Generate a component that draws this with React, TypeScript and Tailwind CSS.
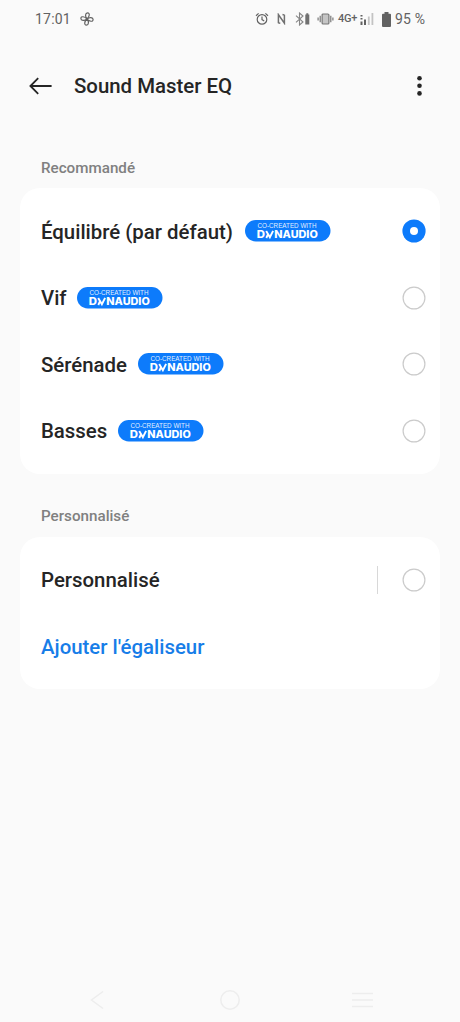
import type { ReactNode } from "react";

const presets = [
  { name: "Équilibré (par défaut)", width: "w-[193px]", selected: true },
  { name: "Vif", width: "w-[25px]", selected: false },
  { name: "Sérénade", width: "w-[86.5px]", selected: false },
  { name: "Basses", width: "w-[66.5px]", selected: false },
];

function StatusBar() {
  return (
    <div className="flex h-[38px] items-center pl-[35px] text-[14px] text-[#626262]">
      <span className="w-[45px] tracking-[0.2px]">17:01</span>
      {/* Fan */}
      <svg width="14" height="14" viewBox="0 0 14 14" fill="none" stroke="#626262" strokeWidth="1.2">
        <path d="M7 7C4.8 4.5 5.2.9 7.6.9S9.8 4.5 7 7Z" />
        <path d="M7 7c2.5-2.2 6.1-1.8 6.1.6S9.5 9.8 7 7Z" />
        <path d="M7 7c2.2 2.5 1.8 6.1-.6 6.1S4.2 9.5 7 7Z" />
        <path d="M7 7C4.5 9.2.9 8.8.9 6.4S4.5 4.2 7 7Z" />
      </svg>
      {/* Alarm */}
      <svg className="ml-[161px]" width="14" height="14" viewBox="0 0 14 14" fill="none" stroke="#626262" strokeWidth="1.2">
        <circle cx="7" cy="7.4" r="4.8" />
        <path d="M1 3.7 3.6 1.4M13 3.7l-2.6-2.3M7 4.6v3l2.2 1.3" />
      </svg>
      {/* NFC */}
      <svg className="ml-[8px]" width="9" height="12" viewBox="0 0 9 12" fill="none" stroke="#707070" strokeWidth="1.5">
        <path d="M1.4 10.2V1.6l6 8.6V1.8M3.3 10.4l-2-.6M5.5 1.5l2 .6" />
      </svg>
      {/* Bluetooth with device battery */}
      <svg className="ml-[9px]" width="15" height="14" viewBox="0 0 15 14" fill="none" stroke="#858585" strokeWidth="1.1">
        <path d="m1 3.6 7 6.4-3.5 3V1L8 4 1 10.4" />
        <path d="M10.3 2.4h4v10.2h-4zM11.3 1.2h2v1.2h-2z" fill="#707070" stroke="none" />
      </svg>
      {/* Vibrate */}
      <svg className="ml-[7px]" width="17" height="12" viewBox="0 0 17 12" fill="none" stroke="#777" strokeWidth="1.2">
        <rect x="5.1" y="1" width="6.8" height="10" rx="1" fill="#c5c5c5" />
        <path d="M3.2 2.8v6.4M1.1 4.5v3M13.8 2.8v6.4M15.9 4.5v3" />
      </svg>
      <span className="ml-[4px] w-[20px] text-[11px] font-medium tracking-[-0.3px] whitespace-nowrap">
        4G<span className="relative -top-px">+</span>
      </span>
      {/* Signal */}
      <svg className="ml-[2px]" width="14" height="14" viewBox="0 0 14 14" fill="#626262">
        <path d="M.5 3h2v1.5h-2zM.5 6h2v1.5h-2zM.5 9.5h2V13h-2zM4 7.5h2V13H4z" />
        <path d="M7.9 4.4h1.8V13H7.9zM11.5 1h1.8v12h-1.8z" fill="#c3c3c3" />
      </svg>
      {/* Battery */}
      <svg className="ml-[7.5px]" width="9" height="15" viewBox="0 0 9 15" fill="#626262">
        <path d="M2.5 0h4v1.8H8a1 1 0 0 1 1 1V14a1 1 0 0 1-1 1H1a1 1 0 0 1-1-1V2.8a1 1 0 0 1 1-1h1.5z" />
      </svg>
      <span className="ml-[4.5px] tracking-[0.2px] whitespace-nowrap">95 %</span>
    </div>
  );
}

function Header() {
  return (
    <header className="flex h-[96px] items-center pl-[29px]">
      <svg width="23" height="18" viewBox="0 0 23 18" fill="none" stroke="#252525" strokeWidth="1.8">
        <path d="M1.6 9h21M9.2 1.1 1.4 9l7.8 7.9" />
      </svg>
      <h1 className="ml-[22px] text-[20.4px] font-medium whitespace-nowrap">Sound Master EQ</h1>
      <svg className="mr-[38px] ml-auto" width="6" height="20" viewBox="0 0 6 20" fill="#252525">
        <circle cx="3.5" cy="2.3" r="2.3" />
        <circle cx="3.5" cy="9.8" r="2.3" />
        <circle cx="3.5" cy="17.4" r="2.3" />
      </svg>
    </header>
  );
}

function DynaudioBadge() {
  return (
    <svg className="ml-[10.5px] shrink-0" width="86" height="22" viewBox="0 0 86 22" fill="#fff">
      <rect width="85.5" height="21.5" rx="10.75" fill="#0d7bfb" />
      <text x="12.5" y="8" fontFamily="Liberation Sans, sans-serif" fontSize="6.4" textLength="59" lengthAdjust="spacingAndGlyphs" fillOpacity=".9">
        CO-CREATED WITH
      </text>
      <text x="11.8" y="18" fontFamily="Inter, sans-serif" fontSize="9.8" fontWeight="800" textLength="8.2" lengthAdjust="spacingAndGlyphs">
        D
      </text>
      {/* The logo's Y: a V with a short foot on its left */}
      <path d="m21.2 10.9 3.7 6.3 3.2-6.3M23 14.2 21.3 18" fill="none" stroke="#fff" strokeWidth="1.9" />
      <text x="29.3" y="18" fontFamily="Inter, sans-serif" fontSize="9.8" fontWeight="800" textLength="43.5" lengthAdjust="spacingAndGlyphs">
        NAUDIO
      </text>
    </svg>
  );
}

function Radio({ selected = false }: { selected?: boolean }) {
  return (
    <svg width="24" height="24" viewBox="0 0 24 24">
      {selected ? (
        <>
          <circle cx="12" cy="12" r="11.6" fill="#0d7bfb" />
          <circle cx="12" cy="12" r="4" fill="#fff" />
        </>
      ) : (
        <circle cx="12" cy="12" r="10.9" fill="none" stroke="#cbcbcb" strokeWidth="1.2" />
      )}
    </svg>
  );
}

function Row({ children }: { children: ReactNode }) {
  return (
    <div className="flex h-[66.5px] items-center pr-[14px] pl-[21px] text-[20.4px] font-medium whitespace-nowrap">
      {children}
    </div>
  );
}

function NavBar() {
  return (
    <nav className="mt-auto flex h-[44px] items-center justify-between pr-[87px] pl-[90px]">
      <svg width="14" height="20" viewBox="0 0 14 20" fill="none" stroke="#ededed" strokeWidth="1.5">
        <path d="M13 1.5 1.5 10 13 18.5" />
      </svg>
      <svg className="ml-[3px]" width="22" height="22" viewBox="0 0 22 22" fill="none" stroke="#ededed" strokeWidth="1.5">
        <circle cx="11" cy="11" r="9.2" />
      </svg>
      <svg width="21" height="16" viewBox="0 0 21 16" stroke="#ededed" strokeWidth="1.5">
        <path d="M0 1.5h21M0 8h21M0 14.5h21" />
      </svg>
    </nav>
  );
}

export default function App() {
  return (
    <div className="flex h-[1022px] w-[460px] flex-col overflow-hidden bg-[#fafafa] font-['Roboto',sans-serif] text-[#252525]">
      <StatusBar />
      <Header />
      <h2 className="mt-[22px] ml-[41px] h-8 text-[15.2px] leading-6 font-medium text-[#808080]">Recommandé</h2>
      <section className="mx-5 rounded-[20px] bg-white py-[10px]">
        {presets.map((preset) => (
          <Row key={preset.name}>
            <span className={`pt-[1.5px] ${preset.width}`}>{preset.name}</span>
            <DynaudioBadge />
            <span className="ml-auto">
              <Radio selected={preset.selected} />
            </span>
          </Row>
        ))}
      </section>
      <h2 className="mt-[30px] mb-px ml-[41px] h-8 text-[15.2px] leading-6 font-medium text-[#808080]">Personnalisé</h2>
      <section className="mx-5 rounded-[20px] bg-white py-[9.5px]">
        <Row>
          <span className="pt-[1.5px]">Personnalisé</span>
          <span className="mr-6 ml-auto h-7 w-px bg-[#d8d8d8]" />
          <Radio />
        </Row>
        <Row>
          <button className="pt-[1.5px] text-[#177de8]">Ajouter l'égaliseur</button>
        </Row>
      </section>
      <NavBar />
    </div>
  );
}
